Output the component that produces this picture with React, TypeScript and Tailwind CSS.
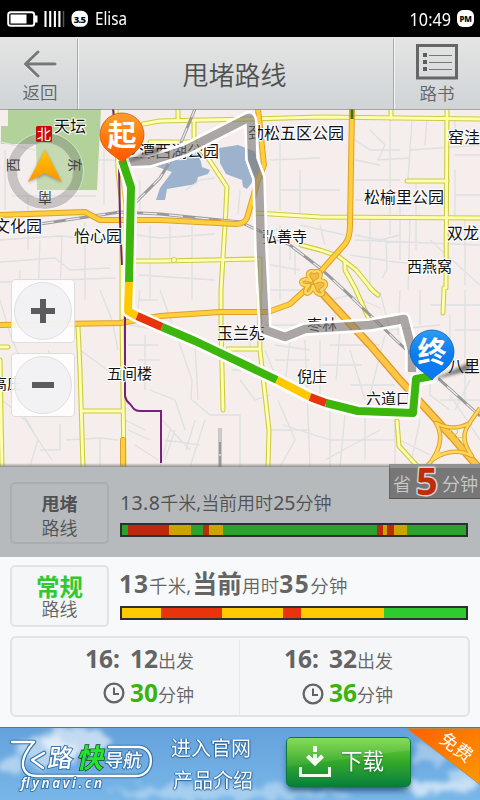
import React from "react";

const MINOR_ROADS = [
  "M116 109L118 172L122 205L122 320L124 467",
  "M143 124L160 121L250 119L320 117L480 119",
  "M178 109V120",
  "M194 120V142L208 158L227 187L225 225L221 290V325L223 410",
  "M150 142H194",
  "M255 213L320 217L480 218",
  "M135 261H160L260 259V290",
  "M301 245L320 250L338 256L356 270L374 292",
  "M345 262V270L355 288L368 317",
  "M370 288L378 295",
  "M444 288L443 313",
  "M397 421L399 446L418 467",
  "M447 109L446 288",
  "M391 109V118",
  "M407 181H447",
  "M78 326L80 370L83 467",
  "M83 411H122",
  "M0 347H8",
  "M0 360L2 467",
  "M259 288L260 350L269 430L268 467",
  "M228 349H259",
];

const MAJOR_ROADS = [
  "M0 215L85 212L100 220H160L236 224Q244 224 247 218L258 180L264 165L258 109",
  "M352 109L350 225Q350 238 345 244L313 280",
  "M0 325L120 323L160 316L220 312H268L290 304L313 283",
  "M313 278L322 293L370 345L400 380L452 437L480 470",
  "M123 440V467",
];

const STREETS =
  "M0 142L35 150M5 150V210M12 196H96M28 196V250M0 240L60 236L110 240M40 240L38 300M0 262L55 258L70 270L110 268M62 236L60 300M85 222V300M20 270L18 330M0 282L116 278M0 300L12 340L40 400M104 140V205M98 160H118M140 180V210M150 225V300M136 235L160 238L215 234M139 275L215 280M170 225V258M192 226V300M186 190L200 180L215 178M240 190L238 214M160 290L180 345L192 380L191 400M140 290L138 310M145 335V390M128 345H158M138 360H160M138 300H158M130 325L160 330M80 350L118 378M100 290L112 320L118 350M48 350L60 380L68 411M0 398L25 420L45 450L52 460M10 390L38 440L30 466M40 450H60V424M66 440L100 438L118 440M100 438V467M128 430L150 440M135 445L158 460M125 420L145 430M192 400L210 415L240 415V467M195 420L186 450M150 390L175 400L185 430M162 420L190 450M165 440L200 445M170 430L160 467M205 420L190 467M175 430L165 460M225 350H250V330M232 370H255M195 345L198 400M240 380L255 400L270 395M265 325H320M290 340L285 385M305 340L310 467M275 360H310M320 340V395M270 430H310M278 400L295 440L280 467M283 425L330 440M330 410V467M345 415L340 467M365 412V460M330 440H395M325 460L380 430M350 350L365 400M340 330L336 380M330 345H380M320 365H362M350 385H395M385 335L370 395M395 400V467M280 125V210M270 160L320 158M300 170V215M280 190H340M300 130L340 140M370 130L385 145L378 160L410 158M410 150L440 148L480 145M355 140L370 150H400M355 160L380 165M390 120V235M412 120L408 180M427 118L425 145M355 180H400M400 195V260M416 182V250M355 200H445M370 220V285M355 240L480 245M350 255L395 262L440 266M355 235L380 240L400 235M386 238L387 270L382 278M410 220L408 290M430 240L480 285M455 120V135H470M455 155H480M455 170V215M455 195H480M455 230H480M465 220V285M400 290L398 335M380 292L390 330L440 325M420 290V325M430 305H480M450 315V350M455 330H480M465 290V400M450 395L480 440M430 330L430 395L450 410M410 390L430 410M280 225V300M265 230H290V260M270 265L300 270M270 290H305M300 225L345 235M320 225L325 245M295 250V275M330 300L350 295L380 308M335 310V325M275 345L310 350M265 350L275 375M420 420L410 467M470 380L455 410M400 440L430 455M440 400H480";

const MAP_LABELS: [string, number, number, number?][] = [
  ["天坛", 54, 132],
  ["龙潭西湖公园", 123, 157],
  ["劲松五区公园", 248, 139],
  ["窑洼", 448, 143],
  ["松榆里公园", 364, 203],
  ["双龙", 447, 239],
  ["西燕窝", 407, 272, 15],
  ["文化园", -6, 232],
  ["怡心园", 74, 242],
  ["弘善寺", 262, 242, 15],
  ["玉兰苑", 217, 339],
  ["枣林", 307, 330, 15],
  ["五间楼", 107, 379, 15],
  ["倪庄", 297, 382, 15],
  ["高庄", -8, 389, 15],
  ["六道口", 366, 404, 15],
  ["八里", 448, 372],
];

const CLOVER = "M314 272C322 268 323 279 315 282C324 277 331 285 321 290C328 295 316 299 313 286C310 299 300 293 309 285C297 287 300 275 311 281C304 272 311 270 314 272Z";
const STAR = "M436 423Q453 432 470 423Q458 437 472 456Q452 446 432 460Q446 440 436 423ZM480 408L468 425M426 467L440 452";

function Cased({ d, casing, fill, w }: { d: string; casing: string; fill: string; w: number }) {
  return (
    <g fill="none" strokeLinecap="round" strokeLinejoin="round">
      <path d={d} stroke={casing} strokeWidth={w} />
      <path d={d} stroke={fill} strokeWidth={w - 2} />
    </g>
  );
}

function Pin({ x, y, label, grad }: { x: number; y: number; label: string; grad: string }) {
  return (
    <g transform={`translate(${x} ${y})`}>
      <path d="M0 27L38 9Q44 17 28 20Z" fill="#222" opacity=".55" filter="url(#soft)" />
      <path d="M0 27C-3 21 -22 15 -22 -1A22 22 0 0 1 22 -1C22 15 3 21 0 27Z" fill={`url(#${grad})`} stroke={grad === "pinA" ? "#d8560c" : "#0e5fbe"} strokeWidth=".8" />
      <text y="9.5" textAnchor="middle" fontSize="29" fontWeight="700" fill="#fff">{label}</text>
    </g>
  );
}

function RouteMap() {
  const main = "M123 162L131 187L129 282L128 311L137 316L162 327L195 341L277 380L310 397L326 403L358 411L413 413L416 380L432 377";
  const alt = "M123 162L150 161L185 150L248 118Q251 117 251 125L252 159L259 178L261 250L265 330L285 337L305 329L370 325L404 319L412 350L412 372";
  const seg: [string, string][] = [
    ["M122 160L131 187L129 282", "#3cb50c"],
    ["M129 282L128 311L137 316", "#ffc800"],
    ["M137 316L162 327", "#e8340c"],
    ["M162 327L195 341L277 380", "#3cb50c"],
    ["M277 380L310 397", "#ffc800"],
    ["M310 397L326 403", "#e8340c"],
    ["M326 403L358 411L413 413L416 379L432 376", "#3cb50c"],
  ];
  return (
    <svg className="block h-[358px] w-[480px]" viewBox="0 109 480 358" fontFamily='"Noto Sans CJK SC", sans-serif'>
      <defs>
        <linearGradient id="pinA" x2="0" y2="1"><stop stopColor="#ffa02c" /><stop offset=".5" stopColor="#ff780c" /><stop offset="1" stopColor="#ff5500" /></linearGradient>
        <linearGradient id="pinB" x2="0" y2="1"><stop stopColor="#2b9cf4" /><stop offset=".5" stopColor="#0b7cec" /><stop offset="1" stopColor="#0a78f5" /></linearGradient>
        <linearGradient id="needle" x2="0" y2="1"><stop stopColor="#ffc400" /><stop offset="1" stopColor="#ff9500" /></linearGradient>
        <linearGradient id="edge" x2="0" y2="1"><stop stopColor="#777" stopOpacity="0" /><stop offset="1" stopColor="#777" stopOpacity=".8" /></linearGradient>
        <filter id="soft" x="-20%" y="-50%" width="140%" height="200%"><feGaussianBlur stdDeviation="1.5" /></filter>
      </defs>
      <rect y="109" width="480" height="358" fill="#f6eeed" />
      <path d="M8 109H101L97 190H37L36 144H1V126H8Z" fill="#b3d29a" />
      <path d="M152 165L195 150L206 144L209 150L200 158L202 167L210 170L208 174L198 177L196 184L167 189L165 200H156L160 188L172 172ZM219 148L238 145L254 151L263 166L250 185L247 189L243 187L242 180L226 174L220 163Z" fill="#9cb2cd" />
      <path d={STREETS} fill="none" stroke="#dde1e0" strokeWidth="1.3" />
      {MINOR_ROADS.map((d) => <path key={d} d={d} fill="none" stroke="#cccb45" strokeWidth="5" strokeLinejoin="round" strokeLinecap="round" />)}
      {MINOR_ROADS.map((d) => <path key={d} d={d} fill="none" stroke="#ffffb0" strokeWidth="2.8" strokeLinejoin="round" strokeLinecap="round" />)}
      <path d="M40 224L120 212L160 214L240 222L290 245L320 268L342 288L400 344L480 416M135 203L160 178L180 145L195 109M220 428V467" fill="none" stroke="#999" strokeWidth="3" />
      <path d="M40 224L120 212L160 214L240 222L290 245L320 268L342 288L400 344L480 416M135 203L160 178L180 145L195 109M220 428V456" fill="none" stroke="#eee" strokeWidth="1.2" strokeDasharray="14 12" />
      {MAJOR_ROADS.map((d) => <Cased key={d} d={d} casing="#dfa02b" fill="#ffcf3c" w={6} />)}
      <path d="M322 293L370 345L400 380L452 437L478 467" fill="none" stroke="#dd9928" strokeWidth="8" />
      <path d="M322 293L370 345L400 380L452 437L478 467" fill="none" stroke="#ffc545" strokeWidth="5.5" />
      <path d="M352 109V119" stroke="#37740b" strokeWidth="3" />
      <g fill="none" stroke="#dda32b" strokeWidth="4.5" strokeLinejoin="round"><path d={STAR} /><path d={CLOVER} fill="#f3bb48" /></g>
      <g fill="none" stroke="#ffd75e" strokeWidth="2.5" strokeLinejoin="round"><path d={STAR} /><path d={CLOVER} /></g>
      <g fill="none" stroke="#d9d060" strokeWidth="1.2"><circle cx="454" cy="431" r="3.5" /><circle cx="460" cy="441" r="3.5" /><circle cx="174" cy="260" r="2.5" fill="#ffffb0" /></g>
      <path d="M113 109L119 165L120 220L122 265M125 316V396Q126 401 130 404L134 409Q136 411 140 411H161V463" fill="none" stroke="#78207a" strokeWidth="2" />
      <g fill="#111" stroke="#fff" strokeWidth="2.2" strokeLinejoin="round" paintOrder="stroke">
        {MAP_LABELS.map(([t, x, y, s]) => <text key={t} x={x} y={y} fontSize={s ?? 16}>{t}</text>)}
      </g>
      <g fill="none" strokeLinejoin="round">
        <mask id="altEdge" maskUnits="userSpaceOnUse" x="0" y="109" width="480" height="358"><path d={alt} stroke="#fff" strokeWidth="14" /><path d={alt} stroke="#000" strokeWidth="8" /></mask>
        <path d={alt} stroke="#fff" strokeWidth="14" mask="url(#altEdge)" />
        <path d={alt} stroke="#7d7878" strokeWidth="8.5" opacity=".62" />
        <path d={main} stroke="#fff" strokeWidth="13" strokeLinecap="round" />
        {seg.map(([d, c]) => <path key={d} d={d} stroke={c} strokeWidth="8" />)}
      </g>
      <Pin x={122} y={136} label="起" grad="pinA" />
      <Pin x={432} y={353} label="终" grad="pinB" />
      <circle cx="45" cy="171" r="29" fill="#eee" opacity=".3" />
      <circle cx="45" cy="171" r="33" fill="none" stroke="#777" strokeOpacity=".36" strokeWidth="10" />
      <circle cx="45" cy="171" r="38.5" fill="none" stroke="#fff" strokeOpacity=".4" />
      <path d="M45 150L28 183L45 175L62 183Z" fill="#444" opacity=".4" filter="url(#soft)" />
      <path d="M45 150L28 182L45 173L62 182Z" fill="url(#needle)" />
      <rect x="36" y="126" width="16" height="16" rx="1.5" fill="#c90a0a" />
      <g fontSize="14" textAnchor="middle">
        <text x="44" y="139" fill="#fff">北</text>
        <g fill="#444">
          <text transform="translate(13 165) rotate(-90)" y="5">西</text>
          <text transform="translate(75 165) rotate(90)" y="5">东</text>
          <text transform="translate(45 198) rotate(180)" y="5">南</text>
        </g>
      </g>
      <rect y="463" width="480" height="4" fill="url(#edge)" />
      <rect y="109" width="480" height="1" fill="#858889" opacity=".7" />
    </svg>
  );
}

function ZoomKey({ minus }: { minus?: boolean }) {
  return (
    <div className="flex h-16 w-16 items-center justify-center rounded border border-[#deddde] bg-white/85">
      <div className="relative flex h-[58px] w-[58px] items-center justify-center rounded-full border border-[#dfe0e1] bg-[#efeff1]/80">
        <span className={`h-[6px] bg-[#5b5b5d] ${minus ? "w-[22px]" : "w-[24px]"}`} />
        {!minus && <span className="absolute h-[24px] w-[6px] bg-[#5b5b5d]" />}
      </div>
    </div>
  );
}

function TrafficBar({ parts }: { parts: [number, string][] }) {
  return (
    <div className="flex h-[14px] w-[348px] border-2 border-[#2d2f30]">
      {parts.map(([w, c], i) => <span key={i} style={{ width: w, backgroundColor: c }} />)}
    </div>
  );
}

function Clock() {
  return (
    <svg className="mr-[5px] h-[22px] w-[22px]" viewBox="0 0 22 22" fill="none" stroke="#646464">
      <circle cx="11" cy="11" r="9.4" strokeWidth="2.3" /><path d="M11 5.5V12H16" strokeWidth="2" />
    </svg>
  );
}

function Departure({ h, m, mins, shift, clock }: { h: string; m: string; mins: string; shift: string; clock: string }) {
  return (
    <div className={`flex flex-col items-end ${shift}`}>
      <div className="flex h-[36px] items-baseline leading-[37px]">
        <span className="text-[24.5px] font-bold">{h}:</span>
        <span className="ml-[10px] text-[24.5px] font-bold">{m}</span>
        <span className="text-[18px] font-[350]">出发</span>
      </div>
      <div className="flex h-[36px] items-center leading-[38px]">
        <span className={clock}><Clock /></span>
        <span className="flex items-baseline"><b className="text-[24.5px] font-bold text-[#3ab40a]">{mins}</b><span className="text-[18px] font-[350]">分钟</span></span>
      </div>
    </div>
  );
}

function Banner() {
  return (
    <div className="relative flex h-[74px] w-[480px] overflow-hidden border-t border-[#4779aa] bg-gradient-to-b from-[#65a2dc] to-[#78b6e8] text-white">
      <svg className="absolute inset-0 h-[74px] w-[480px]" viewBox="0 727 480 73">
        <defs>
          <filter id="cloud" filterUnits="userSpaceOnUse" x="-20" y="700" width="520" height="120"><feTurbulence type="fractalNoise" baseFrequency=".06" numOctaves="4" seed="4" /><feDisplacementMap in="SourceGraphic" scale="26" xChannelSelector="R" yChannelSelector="G" /><feGaussianBlur stdDeviation="2.8" /></filter>
          <linearGradient id="ribbon" x2="1" y2="1"><stop stopColor="#ff5f00" /><stop offset="1" stopColor="#ff9800" /></linearGradient>
        </defs>
        <g fill="#fff" filter="url(#cloud)">
          <ellipse cx="78" cy="740" rx="36" ry="14" opacity=".6" /><ellipse cx="44" cy="750" rx="28" ry="14" opacity=".5" />
          <ellipse cx="10" cy="766" rx="14" ry="9" opacity=".45" /><ellipse cx="428" cy="755" rx="16" ry="9" opacity=".35" />
          <ellipse cx="440" cy="786" rx="38" ry="9" opacity=".6" /><ellipse cx="470" cy="772" rx="18" ry="8" opacity=".45" />
          <ellipse cx="230" cy="790" rx="120" ry="7" opacity=".35" />
        </g>
        <path d="M407 727H480V783Z" fill="url(#ribbon)" stroke="#b88b55" strokeWidth="1" />
        <text transform="translate(456 746) rotate(37)" y="6" textAnchor="middle" fontSize="18" fill="#fff" fontFamily='"Noto Sans CJK SC", sans-serif'>免费</text>
      </svg>
      <svg className="relative h-[74px] w-[166px] shrink-0" viewBox="0 727 166 74" fontFamily='"Noto Sans CJK SC", sans-serif' fill="none">
        <g strokeLinecap="round" strokeLinejoin="round">
          {[["#3876ad", 4.6], ["#fff", 2.3]].map(([c, w]) => (
            <g key={c} stroke={c as string} strokeWidth={w as number}>
              <path d="M12 741H34C27 748 22 758 23 765Q25 775 37 775H136C155 775 156 746 138 746H109" />
              <path d="M44 752L32 759L43 767" />
            </g>
          ))}
        </g>
        <g fill="#fff" stroke="#3876ad" strokeWidth="2" paintOrder="stroke">
          <text transform="translate(47 766) skewX(-8)" fontSize="25" fontWeight="500">路</text>
          <text transform="translate(104 766) skewX(-8)" fontSize="18.5" fontWeight="500">导航</text>
          <text x="21" y="787" fontSize="13.5" fontStyle="italic" fontWeight="600" fontFamily='"Noto Sans", sans-serif' textLength="81">flynavi.cn</text>
        </g>
        <text transform="translate(76 767) skewX(-13)" fontSize="27" fontWeight="700" fill="#24e52d" stroke="#123f22" strokeWidth="1.4" paintOrder="stroke">快</text>
      </svg>
      <div className="relative ml-[5px] flex w-[115px] flex-col pt-[5px] text-[20px] leading-[32px] [text-shadow:0_1px_1px_#2b659c,1px_0_1px_#2b659c,-1px_0_1px_#2b659c]">
        <span>进入官网</span><span className="pl-[2px]">产品介绍</span>
      </div>
      <div className="relative mt-[9px] flex h-[50px] w-[125px] shrink-0 items-center rounded-[5px] border border-[#08783b] bg-gradient-to-b from-[#72d53a] via-[#32a928] to-[#04803c] shadow-[0_5px_7px_-2px_#234f78]">
        <span className="absolute inset-0 bg-gradient-to-b from-white/15 to-transparent [clip-path:polygon(0_0,100%_0,100%_25%,0_60%)]" />
        <svg className="ml-[12px] h-[34px] w-[32px]" viewBox="0 0 32 34" fill="none" stroke="#f3fbf1" strokeWidth="3">
          <path d="M1.5 22V30.5H30.5V22" /><path d="M16 1V7M16 9V18M8.5 11L16 18.5L23.5 11" strokeWidth="4" />
        </svg>
        <span className="-mt-[3px] ml-[10px] text-[21.5px] leading-none [text-shadow:0_1px_2px_#08702b]">下载</span>
      </div>
    </div>
  );
}

export default function App() {
  return (
    <div className="flex h-[800px] w-[480px] flex-col overflow-hidden bg-white font-['Noto_Sans','Noto_Sans_CJK_SC',sans-serif] text-[#646464]">
      <div className="flex h-[37px] shrink-0 items-center bg-black pl-[7px] pr-[6px] text-white">
        <svg className="h-[17px] w-[82px]" viewBox="7 10 82 17">
          <rect x="8.2" y="12.2" width="26" height="13.5" rx="2.5" fill="none" stroke="#fff" strokeWidth="2" /><path d="M35 15.5h2.5v7H35z" fill="#fff" /><path d="M10.5 14.5h16v9h-16z" fill="#fff" />
          <path d="M45.5 11V27M50.2 11V27M54.9 11V27M59.4 11V27" stroke="#fff" strokeWidth="2.1" /><path d="M63.5 11V27" stroke="#555" strokeWidth="1.5" />
          <rect x="71.5" y="10.8" width="16.5" height="16" rx="6.5" fill="#fff" /><text x="79.5" y="22.5" textAnchor="middle" fontSize="9.5" fontWeight="800" letterSpacing="-.8" fill="#000">3.5</text>
        </svg>
        <span className="ml-[6px] origin-left scale-x-[0.82] text-[18.5px] leading-none">Elisa</span>
        <span className="ml-auto origin-right scale-x-[0.9] text-[18px] leading-none">10:49</span>
        <span className="ml-[6px] flex h-[17px] w-[17px] items-center justify-center rounded-[6px] bg-white text-[8px] font-extrabold leading-none tracking-[-0.3px] text-black">PM</span>
      </div>
      <header className="flex h-[72px] shrink-0 bg-gradient-to-b from-[#e4e5e4] to-[#d0d4d7]">
        <div className="mt-[2px] flex w-[78px] flex-col items-center border-r border-[#a6aaad] pl-[3px] pt-[10px] shadow-[1px_0_0_#f3f4f4]">
          <svg className="h-[30px] w-[36px]" viewBox="0 0 36 30" fill="none" strokeLinecap="round" strokeLinejoin="round"><path d="M16 4L3.5 16L16 28M4 16H33" stroke="#f7f8f8" strokeWidth="2.5" /><path d="M16 3L3.5 15L16 27M4 15H33" stroke="#777" strokeWidth="3" /></svg>
          <span className="mt-[4px] text-[17.5px] font-[350] leading-[18px]">返回</span>
        </div>
        <h1 className="flex flex-1 items-center justify-center pr-[2px] pt-[3px] text-[26px] font-[350] leading-none text-[#505050]">甩堵路线</h1>
        <div className="mt-[2px] flex w-[87px] flex-col items-center border-l border-[#a6aaad] pt-[5px] shadow-[inset_1px_0_0_#f3f4f4]">
          <svg className="h-[36px] w-[42px]" viewBox="0 0 42 36" fill="none"><path d="M1.5 2.5H40.5V36" stroke="#f8f8f8" /><rect x="1.5" y="1.5" width="39" height="32.5" stroke="#666" strokeWidth="3" /><path d="M7 9h4v4H7zM7 16h4v4H7zM7 23h4v4H7z" fill="#5d5d5d" /><path d="M13 11.5H36M13 18.5H36M13 25.5H36" stroke="#777" /></svg>
          <span className="mt-[4px] text-[17.5px] font-[350] leading-[18px]">路书</span>
        </div>
      </header>
      <div className="relative h-[358px] shrink-0">
        <RouteMap />
        <div className="absolute left-[11px] top-[170px] flex flex-col gap-[10px]"><ZoomKey /><ZoomKey minus /></div>
      </div>
      <section className="relative flex h-[90px] shrink-0 bg-[#b7babd] pl-[10px] pt-[15px] text-[#505254]">
        <div className="flex h-[62px] w-[99px] flex-col items-center justify-center rounded-[5px] border-2 border-[#abaeb1] pt-[5px] text-[18px] leading-[24px]"><b className="font-bold">甩堵</b><span className="font-[350]">路线</span></div>
        <div className="ml-[11px] flex flex-col">
          <div className="flex h-[38px] items-baseline whitespace-nowrap text-[18px] font-[350] leading-[42px]"><span className="text-[19.5px] font-normal tracking-[0.4px]">13.8</span>千米<span className="font-normal">,</span>当前用时<span className="text-[19.5px] font-normal">25</span>分钟</div>
          <div className="mt-[3px]"><TrafficBar parts={[[6, "#29a329"], [41, "#bb2a0b"], [22, "#cca300"], [12, "#29a329"], [6, "#bb2a0b"], [14, "#cca300"], [154, "#29a329"], [6, "#bb2a0b"], [4, "#cca300"], [7, "#bb2a0b"], [13, "#cca300"], [59, "#29a329"]]} /></div>
        </div>
        <div className="absolute right-0 top-[-3px] flex h-[35px] w-[91px] items-center border-b border-l border-t-4 border-b-[#555] border-l-[#666] border-t-[#929292] bg-[#777] pl-[3px] text-[18px] font-[350] text-[#c9c9c9]">
          <span className="mt-[3px]">省</span>
          <svg className="-mt-[6px] ml-[3px] h-[36px] w-[26px] shrink-0 overflow-visible" viewBox="0 0 26 36"><text x="2" y="33" fontSize="38" fontWeight="700" fill="#c22b0a" stroke="#d4d4d4" strokeWidth="3" paintOrder="stroke" strokeLinejoin="round">5</text></svg>
          <span className="ml-[2px] mt-[3px] whitespace-nowrap">分钟</span>
        </div>
      </section>
      <section className="flex h-[170px] shrink-0 flex-col bg-[#f8f9fb] px-[10px] pt-[8px]">
        <div className="flex">
          <div className="flex h-[62px] w-[99px] flex-col items-center rounded-[5px] border-2 border-[#dfe4e7] bg-[#f5f6f8]"><b className="mt-[8px] text-[23.5px] font-bold leading-[25px] text-[#2fca2f]">常规</b><span className="text-[18px] font-[350] leading-[18px]">路线</span></div>
          <div className="ml-[10px] flex flex-col">
            <div className="flex h-[38px] items-baseline whitespace-nowrap text-[18.4px] font-[350] leading-[38px] tracking-[0.25px]"><b className="text-[24.5px] font-bold tracking-[1px]">13</b>千米<span className="mr-[1px] font-normal">,</span><b className="text-[24.5px] font-bold">当前</b>用时<b className="text-[24.5px] font-bold tracking-[1.5px]">35</b>分钟</div>
            <div className="ml-[1px] mt-[3px]"><TrafficBar parts={[[39, "#ffcb00"], [61, "#e8340c"], [61, "#ffcb00"], [18, "#e8340c"], [83, "#ffcb00"], [82, "#2fca2f"]]} /></div>
          </div>
        </div>
        <div className="mt-[9px] flex h-[81px] w-[460px] rounded-[6px] border-2 border-[#dfe4e7] bg-[#f5f6f8] pt-[2px]">
          <div className="flex w-[228px] justify-end border-r border-[#e6e9eb]"><Departure h="16" m="12" mins="30" shift="mr-[45px]" clock="-mt-[3px]" /></div>
          <div className="flex flex-1 justify-end"><Departure h="16" m="32" mins="36" shift="mr-[75px]" clock="mt-0" /></div>
        </div>
      </section>
      <Banner />
    </div>
  );
}
